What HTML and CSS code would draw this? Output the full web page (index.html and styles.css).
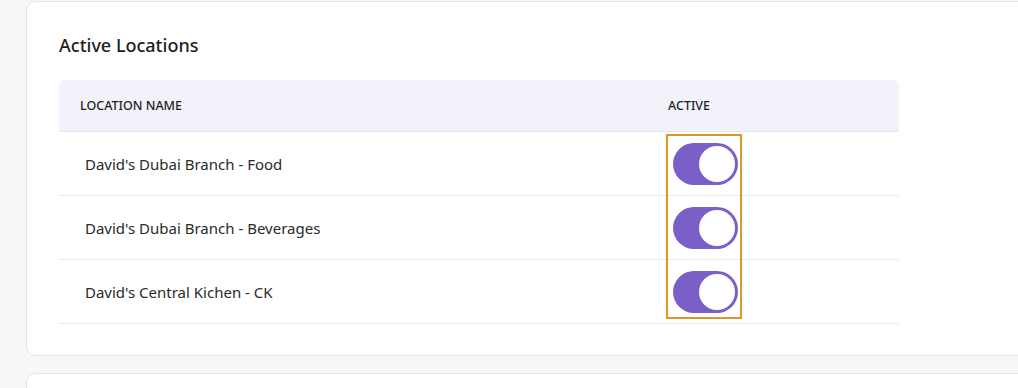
FILE: index.html
```html
<!DOCTYPE html>
<html lang="en">
<head>
<meta charset="utf-8">
<title>Active Locations</title>
<link rel="stylesheet" href="styles.css">
</head>
<body>
<div class="page">
  <section class="card">
    <h2 class="title">Active Locations</h2>
    <div class="table">
      <div class="row head">
        <div class="cell hname">LOCATION NAME</div>
        <div class="cell hactive">ACTIVE</div>
      </div>
      <div class="row">
        <div class="cell name">David's Dubai Branch - Food</div>
        <div class="cell active"><span class="toggle on"><span class="knob"></span></span></div>
      </div>
      <div class="row">
        <div class="cell name">David's Dubai Branch - Beverages</div>
        <div class="cell active"><span class="toggle on"><span class="knob"></span></span></div>
      </div>
      <div class="row">
        <div class="cell name">David's Central Kichen - CK</div>
        <div class="cell active"><span class="toggle on"><span class="knob"></span></span></div>
      </div>
      <div class="highlight"></div>
    </div>
  </section>
  <section class="card next"></section>
</div>
</body>
</html>
```
FILE: styles.css
```css
html, body {
  margin: 0;
  padding: 0;
}
body {
  background: #f7f7fa;
  font-family: "Noto Sans", "Open Sans", sans-serif;
  color: #222;
  overflow: hidden;
  height: 388px;
}
.page {
  padding: 1px 0 0 26px;
  display: flex;
  flex-direction: column;
  gap: 17px;
}
.card {
  background: #fff;
  border: 1px solid #e2e2e8;
  border-radius: 9px;
  margin-right: -30px;
  padding: 30px 32px 31px;
}
.card.next {
  height: 60px;
  padding: 0;
}
.title {
  margin: 0 0 22px;
  font-size: 18px;
  line-height: 26px;
  font-weight: 500;
  color: #1e1e1e;
}
.table {
  position: relative;
  width: 840px;
}
.row {
  display: grid;
  grid-template-columns: 609px 1fr;
  height: 63px;
  align-items: center;
  border-bottom: 1px solid #ebebef;
}
.row.head {
  height: 51px;
  background: #f3f2fa;
  border-radius: 6px 6px 0 0;
  border-bottom: 1px solid #e8e7f0;
  font-size: 12.5px;
  font-weight: 500;
  color: #1e1e1e;
}
.cell.hname {
  padding-left: 21px;
}
.cell.name {
  padding-left: 26px;
  font-size: 15px;
  color: #2a2a2a;
}
.cell.active {
  padding-left: 5px;
  display: flex;
  align-items: center;
}
.toggle {
  width: 65px;
  height: 42px;
  border-radius: 21px;
  background: #7a5fc9;
  position: relative;
  display: block;
}
.knob {
  position: absolute;
  right: 3px;
  top: 3px;
  width: 36px;
  height: 36px;
  border-radius: 50%;
  background: #fff;
}
.highlight {
  position: absolute;
  left: 607px;
  top: 54px;
  width: 72px;
  height: 181px;
  border: 2px solid #d8962c;
  pointer-events: none;
}
```
